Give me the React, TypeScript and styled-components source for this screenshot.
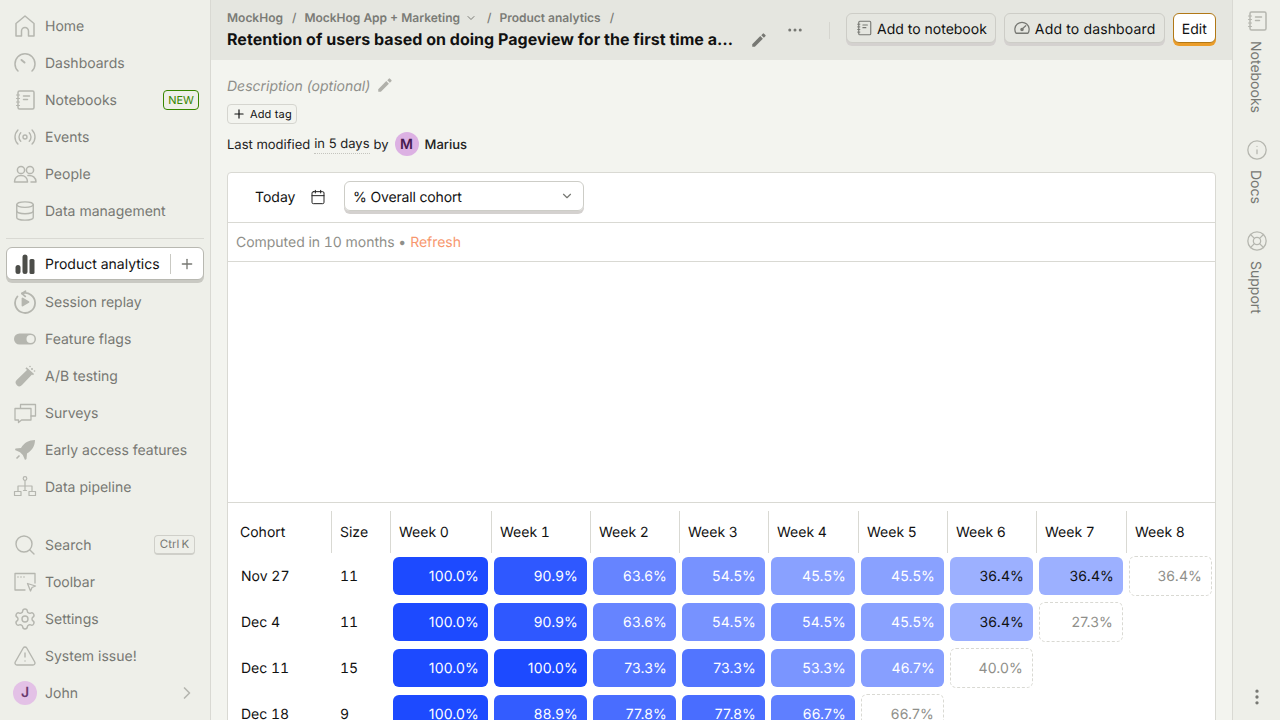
import React from "react";
import styled, { createGlobalStyle } from "styled-components";
import {
  Calendar,
  ChevronDown,
  ChevronRight,
  Database,
  Ellipsis,
  EllipsisVertical,
  Info,
  LifeBuoy,
  Plus,
  Radio,
  Search,
  Settings,
  TriangleAlert,
} from "lucide-react";

const GlobalStyle = createGlobalStyle`
  html, body { margin: 0; padding: 0; height: 100%; }
  body {
    font-family: Inter, "Liberation Sans", sans-serif;
    font-size: 14px;
    text-rendering: geometricPrecision;
    color: #111;
    background: #f3f4ef;
    overflow: hidden;
  }
  * { box-sizing: border-box; }
`;

const Shell = styled.div`
  display: flex;
  width: 1280px;
  height: 720px;
  overflow: hidden;
`;

//sidebar
const Sidebar = styled.nav`
  width: 211px;
  flex: none;
  display: flex;
  flex-direction: column;
  padding: 7px 6px 9px;
  background: #eeefe9;
  border-right: 1px solid #d9d9d3;
`;

const NavItem = styled.div`
  height: 37px;
  display: flex;
  align-items: center;
  gap: 8px;
  padding: 0 5px 0 7px;
  color: #777873;
  white-space: nowrap;
`;

const IconSlot = styled.span`
  width: 24px;
  height: 24px;
  flex: none;
  display: flex;
  align-items: center;
  justify-content: center;
  color: #b5b6af;
`;

const NavLabel = styled.span`
  flex: 1;
  padding-top: 1px;
`;

const ActiveLabel = styled.span`
  flex: 1;
  padding-top: 2px;
`;

const Divider = styled.div`
  height: 1px;
  margin: 9px 0 8px;
  background: #d9d9d3;
`;

const ActiveItem = styled.div`
  height: 33px;
  margin-bottom: 3px;
  display: flex;
  align-items: center;
  gap: 8px;
  padding: 0 0 0 6px;
  color: #111;
  white-space: nowrap;
  background: #fff;
  border: 1px solid #b8b8b1;
  border-radius: 6px;
  box-shadow: 0 3px 0 0 #c9c9c3;
`;

const ActiveAdd = styled.span`
  width: 33px;
  height: 20px;
  flex: none;
  display: flex;
  align-items: center;
  justify-content: center;
  border-left: 1px solid #c9c9c3;
  color: #777873;
`;

const Spacer = styled.div`
  flex: 1;
`;

const NewBadge = styled.span`
  height: 20px;
  width: 36px;
  display: flex;
  align-items: center;
  justify-content: center;
  font-size: 11px;
  color: #388600;
  border: 1px solid #388600;
  border-radius: 4px;
`;

const KeyHint = styled.span`
  height: 20px;
  width: 41px;
  margin-right: 4px;
  display: flex;
  align-items: center;
  justify-content: center;
  font-size: 11.5px;
  word-spacing: -1px;
  color: #777873;
  border: 1px solid #cfcfc9;
  border-bottom-width: 2px;
  border-radius: 4px;
`;

const Avatar = styled.span<{ $size: number; $bg: string; $fg: string; $gap?: number }>`
  width: ${(p) => p.$size}px;
  height: ${(p) => p.$size}px;
  flex: none;
  display: flex;
  align-items: center;
  justify-content: center;
  margin-left: ${(p) => p.$gap ?? 0}px;
  border-radius: 50%;
  font-weight: 600;
  font-size: ${(p) => Math.round(p.$size * 0.58)}px;
  background: ${(p) => p.$bg};
  color: ${(p) => p.$fg};
`;

//main column
const Main = styled.main`
  flex: 1;
  min-width: 0;
  display: flex;
  flex-direction: column;
`;

const TopBar = styled.header`
  height: 60px;
  flex: none;
  display: flex;
  align-items: center;
  padding: 0 16px;
  background: #e5e6e0;
`;

const Titles = styled.div`
  width: 510px;
  flex: none;
  display: flex;
  flex-direction: column;
  margin-top: -2px;
`;

const Crumbs = styled.div`
  display: flex;
  align-items: center;
  height: 16px;
  margin-bottom: 3px;
  font-size: 12px;
  font-weight: 600;
  color: #7a7b76;
  white-space: nowrap;
`;

const CrumbSlash = styled.span`
  margin: 0 8px 0 9px;
  font-weight: 500;
`;

const CrumbChevron = styled.span`
  display: flex;
  margin: 0 1px 0 5px;
`;

const Title = styled.h1`
  margin: 0;
  font-size: 16px;
  line-height: 20px;
  font-weight: 700;
  letter-spacing: 0.03px;
  color: #111;
  white-space: nowrap;
  overflow: hidden;
  text-overflow: ellipsis;
`;

const TitlePencil = styled.span`
  display: flex;
  margin: 20px 0 0 13px;
  color: #777873;
`;

const MoreBtn = styled.span`
  display: flex;
  margin: 0 0 0 18px;
  color: #777873;
`;

const BarDivider = styled.span`
  width: 1px;
  height: 17px;
  margin: 0 16px 0 25px;
  background: #d5d5cf;
`;

const BarButton = styled.button<{ $primary?: boolean }>`
  height: 30px;
  margin: 0 8px 4px 0;
  padding: 2px 8px 0;
  display: flex;
  align-items: center;
  gap: 4px;
  white-space: nowrap;
  font: 400 14px Inter, "Liberation Sans", sans-serif;
  text-rendering: geometricPrecision;
  color: #111;
  background: ${(p) => (p.$primary ? "#fff" : "#e5e6e0")};
  border: 1px solid ${(p) => (p.$primary ? "#b17816" : "#cdcdc7")};
  border-radius: 6px;
  box-shadow: 0 3px 0 0 ${(p) => (p.$primary ? "#eb9d2a" : "#d4d1cf")};
  &:last-child {
    margin-right: 0;
  }
`;

const DashboardButton = styled(BarButton)`
  width: 161px;
  letter-spacing: 0.15px;
`;

const ButtonIcon = styled.span`
  display: flex;
  margin-top: -2px;
  color: #777873;
`;

const Content = styled.div`
  flex: 1;
  min-height: 0;
  padding: 0 16px;
  overflow: hidden;
`;

const DescriptionRow = styled.div`
  height: 20px;
  margin-top: 15px;
  padding-top: 2px;
  display: flex;
  align-items: center;
  gap: 8px;
  font-style: italic;
  color: #8f8f8a;
`;

const DescriptionPencil = styled.span`
  display: flex;
  margin: -2px 0 0 -2px;
  color: #b0b0aa;
`;

const TagButton = styled.span`
  width: 70px;
  height: 20px;
  margin-top: 9px;
  display: flex;
  align-items: center;
  gap: 4px;
  padding: 0 4px;
  font-size: 11px;
  letter-spacing: 0.15px;
  white-space: nowrap;
  color: #111;
  border: 1px solid #d5d5cf;
  border-radius: 4px;
`;

const ModifiedRow = styled.div`
  height: 24px;
  margin-top: 8px;
  padding-top: 1px;
  display: flex;
  align-items: center;
  font-size: 13px;
  color: #222;
  white-space: nowrap;
`;

const DottedTime = styled.span`
  margin: 0 4px;
  border-bottom: 1px dotted #c4c4be;
  line-height: 18px;
`;

const OwnerAvatar = styled(Avatar)`
  margin-top: -1px;
`;

const Owner = styled.span`
  margin-left: 6px;
  font-weight: 500;
`;

const Card = styled.section`
  margin-top: 16px;
  height: 620px;
  background: #fff;
  border: 1px solid #d9d9d3;
  border-radius: 4px;
`;

const FilterRow = styled.div`
  height: 50px;
  display: flex;
  align-items: center;
  padding: 0 0 2px 27px;
  border-bottom: 1px solid #d9d9d3;
`;

const DateLabel = styled.span`
  width: 55px;
  padding-top: 2px;
`;

const CalendarSlot = styled.span`
  width: 34px;
  display: flex;
  color: #222;
`;

const SelectBox = styled.div`
  width: 240px;
  height: 30px;
  margin-top: -1px;
  display: flex;
  align-items: center;
  justify-content: space-between;
  padding: 2px 9px 0 8px;
  letter-spacing: -0.15px;
  border: 1px solid #cdcdc7;
  border-radius: 6px;
  box-shadow: 0 3px 0 0 #d4d1cf;
  color: #111;
`;

const SelectChevron = styled.span`
  display: flex;
  margin-top: -2px;
  color: #777873;
`;

const ComputedRow = styled.div`
  height: 39px;
  display: flex;
  align-items: center;
  padding-left: 8px;
  font-variant-numeric: tabular-nums;
  letter-spacing: -0.03px;
  color: #8f8f8a;
  border-bottom: 1px solid #d9d9d3;
`;

const RefreshLink = styled.span`
  margin-left: 4px;
  color: #f7986f;
`;

const ChartArea = styled.div`
  height: 241px;
  border-bottom: 1px solid #d9d9d3;
`;

const RetentionTable = styled.div`
  display: grid;
  grid-template-columns: 103px 59px 101px 99px 89px 89px 90px 89px 89px 90px 89px;
  padding-top: 8px;
  font-variant-numeric: tabular-nums;
`;

const HeadCell = styled.div<{ $first?: boolean }>`
  height: 42px;
  display: flex;
  align-items: center;
  padding-left: ${(p) => (p.$first ? "12px" : "8px")};
  border-left: ${(p) => (p.$first ? "none" : "1px solid #d9d9d3")};
`;

const RowLabel = styled.div`
  height: 46px;
  display: flex;
  align-items: center;
  padding-left: 13px;
`;

const SizeLabel = styled(RowLabel)`
  padding-left: 9px;
`;

const Cell = styled.div`
  height: 46px;
  padding: 4px 3px;
`;

const CellBox = styled.div<{ $dashed?: boolean; $dark?: boolean }>`
  height: 38px;
  display: flex;
  align-items: center;
  justify-content: flex-end;
  padding-right: 9px;
  border-radius: 6px;
  font-variant-numeric: normal;
  letter-spacing: 0.15px;
  color: ${(p) => (p.$dashed ? "#8f8f8a" : p.$dark ? "#111" : "#fff")};
  ${(p) =>
    p.$dashed &&
    `margin: -1px 0; height: 40px; border: 1px dashed #d9d9d3;`}
`;

//right rail
const Rail = styled.aside`
  width: 48px;
  flex: none;
  display: flex;
  flex-direction: column;
  align-items: center;
  padding-top: 9px;
  background: #eeefe9;
  border-left: 1px solid #d9d9d3;
`;

const RailItem = styled.div`
  display: flex;
  flex-direction: column;
  align-items: center;
  gap: 8px;
  margin-bottom: 25px;
  color: #777873;
`;

const RailLabel = styled.span`
  writing-mode: vertical-rl;
  line-height: 20px;
  margin-right: 3px;
`;

const RailMore = styled.span`
  margin-top: auto;
  margin-bottom: 13px;
  display: flex;
  color: #777873;
`;

//icons
const svgProps = {
  viewBox: "0 0 24 24",
  fill: "none",
  stroke: "currentColor",
  strokeWidth: 1.5,
  strokeLinecap: "round" as const,
  strokeLinejoin: "round" as const,
};

const HomeIcon = () => (
  <svg width={24} height={24} {...svgProps}>
    <path d="M3 22V9.500L12 2l9 7.500V22h-5.500v-5a3.500 3.500 0 0 0-7 0v5z" />
  </svg>
);

const NotebookIcon = ({ size = 24 }: { size?: number }) => (
  <svg width={size} height={size} {...svgProps}>
    <rect x="5" y="3" width="16" height="18" rx="1.5" />
    <path d="M3.5 7h3M3.5 10.5h3M3.5 14h3M3.5 17.5h3" strokeWidth={1.2} />
    <path d="M10.5 8h6M10.5 11.5h4" />
  </svg>
);

const GaugeIcon = () => (
  <svg width={24} height={24} {...svgProps}>
    <path d="M5 20a10 10 0 1 1 14 0" />
    <path d="M8.5 9l3 2.5" strokeWidth={2} />
  </svg>
);

const SpeedIcon = () => (
  <svg width={18} height={18} {...svgProps} strokeWidth={1.7}>
    <path d="M4 19a9.500 9.500 0 1 1 16 0z" />
    <path d="M17 9l-4.500 4" />
    <circle cx="12" cy="14" r="1.500" fill="currentColor" />
  </svg>
);

const PeopleIcon = () => (
  <svg width={24} height={24} {...svgProps}>
    <circle cx="8" cy="8" r="3.6" />
    <circle cx="17" cy="8" r="3.6" />
    <path d="M1.5 20c0-4 2.6-6.5 6.5-6.5s6.5 2.5 6.5 6.5z" />
    <path d="M15 13.6c4.5-.6 8 2 8 6.4h-5" />
  </svg>
);

const BarsIcon = () => (
  <svg width={24} height={24} viewBox="0 0 24 24" fill="#4c4d49">
    <rect x="2.5" y="13" width="5" height="9" rx="2.5" />
    <rect x="9.5" y="2.5" width="5" height="19.5" rx="2.5" />
    <rect x="16.5" y="7" width="5" height="15" rx="1.5" />
  </svg>
);

const ReplayIcon = () => (
  <svg width={24} height={24} {...svgProps} strokeWidth={1.8}>
    <path d="M9 3.4A10 10 0 1 1 4.4 6.5" />
    <path d="M12.5 1.2 9 3.6l3.2 2.8" />
    <path d="M9.5 8.5v7l6-3.5z" fill="currentColor" />
  </svg>
);

const ToggleIcon = () => (
  <svg width={24} height={24} viewBox="0 0 24 24">
    <rect x="1" y="6.5" width="22" height="11" rx="5.5" fill="currentColor" />
    <circle cx="17.5" cy="12" r="4" fill="#eeefe9" />
  </svg>
);

const FlaskIcon = () => (
  <svg width={24} height={24} viewBox="0 0 24 24" fill="currentColor">
    <path d="M14.5 5.5l5 4.5-10.5 11a3.6 3.6 0 0 1-5.3-4.9z" />
    <path d="M13 3.8l7.5 6.8" stroke="currentColor" strokeWidth="1.6" />
    <circle cx="19" cy="5" r="1" />
    <circle cx="17" cy="2.5" r=".8" />
    <circle cx="21.5" cy="7" r=".8" />
  </svg>
);

const SurveysIcon = () => (
  <svg width={24} height={24} {...svgProps} strokeWidth={1.3}>
    <path d="M7.5 7V3.5h15V15H18" />
    <path d="M2 7.5h16V19H8.5L5.5 21.5V19H2z" />
  </svg>
);

const RocketIcon = () => (
  <svg width={24} height={24} viewBox="0 0 24 24" fill="currentColor">
    <path d="M22 2c-6.5.2-10.5 2.5-14 8l-5.500.5L2 12l5 2.200 2.800 2.800L12 22l1.500-1 .5-5.500c5.500-3.500 7.800-7.500 8-13.500z" />
    <path d="M6.500 17.500l-3 3" stroke="currentColor" strokeWidth="1.600" />
  </svg>
);

const PipelineIcon = () => (
  <svg width={24} height={24} {...svgProps} strokeWidth={1.2}>
    <circle cx="12" cy="3.500" r="1.800" />
    <path d="M12 5.500v10M12 11H5v5M12 11h7v5" />
    <rect x="1.500" y="16.500" width="6.500" height="4" />
    <rect x="16" y="16.500" width="6.500" height="4" />
    <path d="M10.500 15.500h3" />
  </svg>
);

const ToolbarIcon = () => (
  <svg width={24} height={24} {...svgProps} strokeWidth={1.3}>
    <path d="M12 20H2V3.500h20V13" />
    <path d="M5 7h.01M8 7h.01M11 7h.01" strokeWidth={1.6} />
    <path d="M14.500 13.500 22.500 16l-3.500 1.500-1.500 3.500z" />
  </svg>
);

const PencilIcon = ({ size = 16 }: { size?: number }) => (
  <svg width={size} height={size} viewBox="0 0 24 24" fill="currentColor">
    <path d="M3 17.500V21h3.500L17.200 10.300l-3.500-3.500z" />
    <path d="M15 5.500l3.500 3.500 2-2a1.200 1.200 0 0 0 0-1.700l-1.800-1.800a1.200 1.200 0 0 0-1.700 0z" />
  </svg>
);

type Row = { date: string; size: number; values: number[]; partial: number };

const rows: Row[] = [
  { date: "Nov 27", size: 11, values: [100, 90.9, 63.6, 54.5, 45.5, 45.5, 36.4, 36.4], partial: 36.4 },
  { date: "Dec 4", size: 11, values: [100, 90.9, 63.6, 54.5, 54.5, 45.5, 36.4], partial: 27.3 },
  { date: "Dec 11", size: 15, values: [100, 100, 73.3, 73.3, 53.3, 46.7], partial: 40.0 },
  { date: "Dec 18", size: 9, values: [100, 88.9, 77.8, 77.8, 66.7], partial: 66.7 },
];

const WEEKS = 9;

const cellColor = (value: number) =>
  `rgba(29, 74, 255, ${(0.12 + (0.88 * value) / 100).toFixed(3)})`;

const topNav = [
  { label: "Home", icon: <HomeIcon /> },
  { label: "Dashboards", icon: <GaugeIcon /> },
  { label: "Notebooks", icon: <NotebookIcon />, badge: true },
  { label: "Events", icon: <Radio size={24} strokeWidth={1.4} /> },
  { label: "People", icon: <PeopleIcon /> },
  { label: "Data management", icon: <Database size={22} strokeWidth={1.5} /> },
];

const midNav = [
  { label: "Session replay", icon: <ReplayIcon /> },
  { label: "Feature flags", icon: <ToggleIcon /> },
  { label: "A/B testing", icon: <FlaskIcon /> },
  { label: "Surveys", icon: <SurveysIcon /> },
  { label: "Early access features", icon: <RocketIcon /> },
  { label: "Data pipeline", icon: <PipelineIcon /> },
];

const App = () => {
  return (
    <Shell>
      <GlobalStyle />
      <Sidebar>
        {topNav.map((item) => (
          <NavItem key={item.label}>
            <IconSlot>{item.icon}</IconSlot>
            <NavLabel>{item.label}</NavLabel>
            {item.badge && <NewBadge>NEW</NewBadge>}
          </NavItem>
        ))}
        <Divider />
        <ActiveItem>
          <IconSlot>
            <BarsIcon />
          </IconSlot>
          <ActiveLabel>Product analytics</ActiveLabel>
          <ActiveAdd>
            <Plus size={16} />
          </ActiveAdd>
        </ActiveItem>
        {midNav.map((item) => (
          <NavItem key={item.label}>
            <IconSlot>{item.icon}</IconSlot>
            <NavLabel>{item.label}</NavLabel>
          </NavItem>
        ))}
        <Spacer />
        <NavItem>
          <IconSlot>
            <Search size={24} strokeWidth={1.4} />
          </IconSlot>
          <NavLabel>Search</NavLabel>
          <KeyHint>Ctrl K</KeyHint>
        </NavItem>
        <NavItem>
          <IconSlot>
            <ToolbarIcon />
          </IconSlot>
          <NavLabel>Toolbar</NavLabel>
        </NavItem>
        <NavItem>
          <IconSlot>
            <Settings size={24} strokeWidth={1.4} />
          </IconSlot>
          <NavLabel>Settings</NavLabel>
        </NavItem>
        <NavItem>
          <IconSlot>
            <TriangleAlert size={24} strokeWidth={1.4} />
          </IconSlot>
          <NavLabel>System issue!</NavLabel>
        </NavItem>
        <NavItem>
          <Avatar $size={24} $bg="#e3c1e6" $fg="#6a3a6e">
            J
          </Avatar>
          <NavLabel>John</NavLabel>
          <IconSlot>
            <ChevronRight size={20} />
          </IconSlot>
        </NavItem>
      </Sidebar>

      <Main>
        <TopBar>
          <Titles>
            <Crumbs>
              MockHog
              <CrumbSlash>/</CrumbSlash>
              MockHog App + Marketing
              <CrumbChevron>
                <ChevronDown size={12} />
              </CrumbChevron>
              <CrumbSlash>/</CrumbSlash>
              Product analytics
              <CrumbSlash>/</CrumbSlash>
            </Crumbs>
            <Title>
              Retention of users based on doing Pageview for the first time and coming back
            </Title>
          </Titles>
          <TitlePencil>
            <PencilIcon size={18} />
          </TitlePencil>
          <MoreBtn>
            <Ellipsis size={18} />
          </MoreBtn>
          <BarDivider />
          <BarButton>
            <ButtonIcon>
              <NotebookIcon size={18} />
            </ButtonIcon>
            Add to notebook
          </BarButton>
          <DashboardButton>
            <ButtonIcon>
              <SpeedIcon />
            </ButtonIcon>
            Add to dashboard
          </DashboardButton>
          <BarButton $primary>Edit</BarButton>
        </TopBar>

        <Content>
          <DescriptionRow>
            Description (optional)
            <DescriptionPencil>
              <PencilIcon size={18} />
            </DescriptionPencil>
          </DescriptionRow>
          <TagButton>
            <Plus size={14} />
            Add tag
          </TagButton>
          <ModifiedRow>
            Last modified
            <DottedTime>in 5 days</DottedTime>
            by
            <OwnerAvatar $size={24} $bg="#dcb1e3" $fg="#461a50" $gap={6}>
              M
            </OwnerAvatar>
            <Owner>Marius</Owner>
          </ModifiedRow>

          <Card>
            <FilterRow>
              <DateLabel>Today</DateLabel>
              <CalendarSlot>
                <Calendar size={16} strokeWidth={1.5} />
              </CalendarSlot>
              <SelectBox>
                % Overall cohort
                <SelectChevron>
                  <ChevronDown size={14} />
                </SelectChevron>
              </SelectBox>
            </FilterRow>
            <ComputedRow>
              Computed in 10 months •<RefreshLink>Refresh</RefreshLink>
            </ComputedRow>
            <ChartArea />
            <RetentionTable>
              <HeadCell $first>Cohort</HeadCell>
              <HeadCell>Size</HeadCell>
              {Array.from({ length: WEEKS }, (_, week) => (
                <HeadCell key={week}>Week {week}</HeadCell>
              ))}
              {rows.map((row) => (
                <React.Fragment key={row.date}>
                  <RowLabel>{row.date}</RowLabel>
                  <SizeLabel>{row.size}</SizeLabel>
                  {Array.from({ length: WEEKS }, (_, week) => {
                    const value = row.values[week];
                    if (value !== undefined) {
                      return (
                        <Cell key={week}>
                          <CellBox
                            $dark={value < 40}
                            style={{ backgroundColor: cellColor(value) }}
                          >
                            {value.toFixed(1)}%
                          </CellBox>
                        </Cell>
                      );
                    }
                    return (
                      <Cell key={week}>
                        {week === row.values.length && (
                          <CellBox $dashed>{row.partial.toFixed(1)}%</CellBox>
                        )}
                      </Cell>
                    );
                  })}
                </React.Fragment>
              ))}
            </RetentionTable>
          </Card>
        </Content>
      </Main>

      <Rail>
        <RailItem>
          <IconSlot>
            <NotebookIcon />
          </IconSlot>
          <RailLabel>Notebooks</RailLabel>
        </RailItem>
        <RailItem>
          <IconSlot>
            <Info size={22} strokeWidth={1.4} />
          </IconSlot>
          <RailLabel>Docs</RailLabel>
        </RailItem>
        <RailItem>
          <IconSlot>
            <LifeBuoy size={22} strokeWidth={1.4} />
          </IconSlot>
          <RailLabel>Support</RailLabel>
        </RailItem>
        <RailMore>
          <EllipsisVertical size={20} />
        </RailMore>
      </Rail>
    </Shell>
  );
};

export default App;
